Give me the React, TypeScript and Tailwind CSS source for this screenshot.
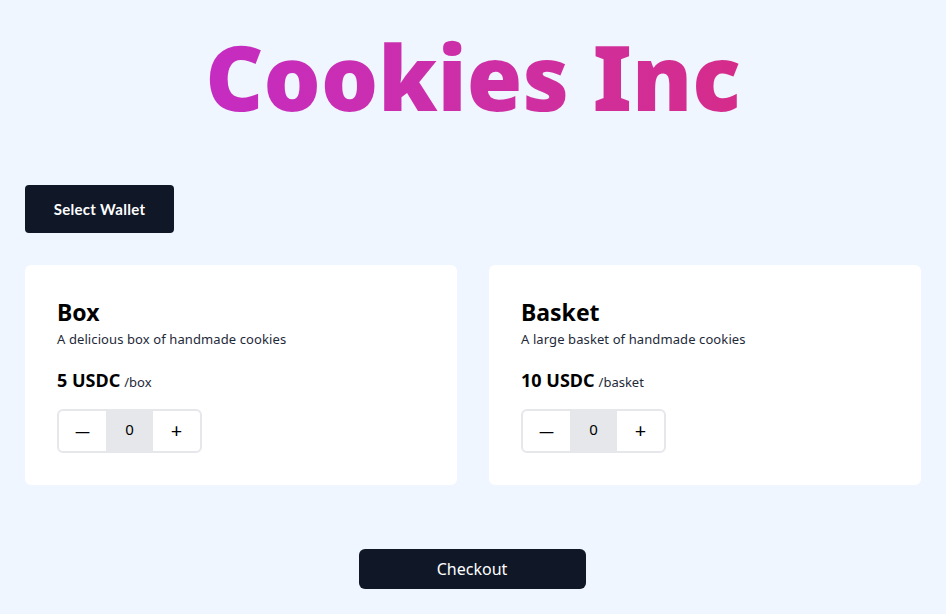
import { useState } from 'react';

type Product = { id: string; name: string; description: string; price: number; unit: string };

const PRODUCTS: Product[] = [
  { id: 'box', name: 'Box', description: 'A delicious box of handmade cookies', price: 5, unit: 'box' },
  { id: 'basket', name: 'Basket', description: 'A large basket of handmade cookies', price: 10, unit: 'basket' },
];

function ProductCard({ product, count, onChange }: { product: Product; count: number; onChange: (n: number) => void }) {
  return (
    <div className="bg-white rounded-md h-[220px] px-8 pt-[32px]">
      <h2 className="text-[23px] leading-[30px] font-bold text-black">{product.name}</h2>
      <p className="mt-[3px] text-[13px] leading-[18px] text-gray-800 tracking-[0.1px]">{product.description}</p>

      <div className="mt-[19px] flex items-baseline gap-1">
        <span className="text-[18px] font-bold text-black">{product.price} USDC</span>
        <span className="text-[13px] text-gray-800">/{product.unit}</span>
      </div>

      {/* Quantity stepper */}
      <div className="mt-[15px] inline-flex border-2 border-gray-200 rounded-md overflow-hidden h-11">
        <button onClick={() => onChange(Math.max(0, count - 1))} className="w-[47px] flex items-center justify-center text-[15px] text-black">
          —
        </button>
        <div className="w-[47px] bg-gray-200 flex items-center justify-center text-[15px] text-black pb-1">{count}</div>
        <button onClick={() => onChange(count + 1)} className="w-[47px] flex items-center justify-center text-xl text-black">
          +
        </button>
      </div>
    </div>
  );
}

export default function App() {
  const [counts, setCounts] = useState<Record<string, number>>({ box: 0, basket: 0 });

  return (
    <div className="min-h-[614px] bg-blue-50 px-[25px] pt-[16px] pb-[25px]" style={{ fontFamily: '"Noto Sans", "Open Sans", sans-serif' }}>
      <h1 className="text-center text-[90px] leading-[120px] font-black bg-gradient-to-r from-[#c026d3] to-[#db2777] bg-clip-text text-transparent">
        Cookies Inc
      </h1>

      <div className="mt-[49px]">
        <button className="h-12 w-[149px] bg-gray-900 text-white rounded text-[15px] font-bold tracking-[0.3px]" style={{ fontFamily: 'Lato, sans-serif' }}>
          Select Wallet
        </button>
      </div>

      <div className="mt-8 grid grid-cols-2 gap-8">
        {PRODUCTS.map((p) => (
          <ProductCard key={p.id} product={p} count={counts[p.id]} onChange={(n) => setCounts({ ...counts, [p.id]: n })} />
        ))}
      </div>

      <div className="mt-16 flex justify-center">
        <button className="w-[227px] h-10 bg-gray-900 text-white rounded-md text-base -translate-x-px">Checkout</button>
      </div>
    </div>
  );
}
